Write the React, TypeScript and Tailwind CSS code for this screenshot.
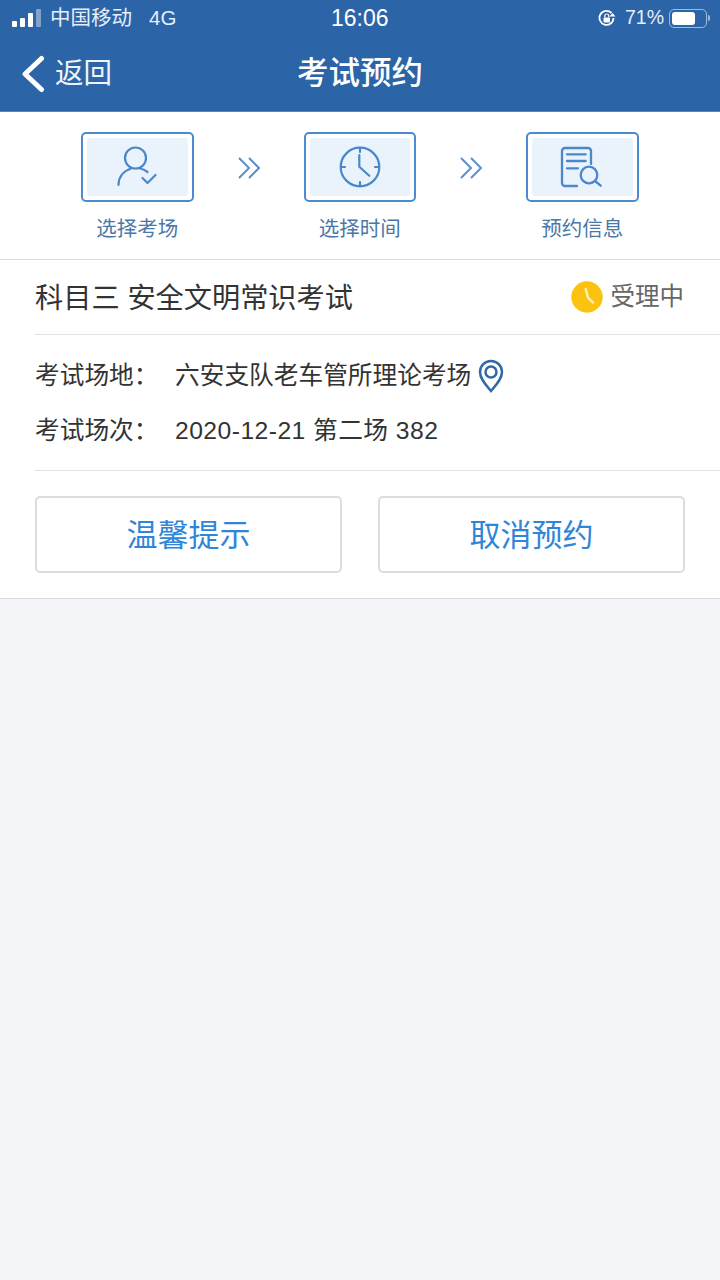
import React from 'react';

const font = { fontFamily: '"Liberation Sans", "Noto Sans CJK SC", sans-serif' };

const UserIcon = () => (
  <svg width="46" height="46" viewBox="0 0 46 46" fill="none" stroke="#4a88c9" strokeWidth="2.200" strokeLinecap="round" strokeLinejoin="round">
    <circle cx="21.500" cy="14" r="10.500" />
    <path d="M4.500 41c0-8 5-14 12.500-16.500M26 24.500c3 .5 5.500 2 7.500 3.500" />
    <path d="M28.500 34l5 5 8-8" />
  </svg>
);

const ClockIcon = () => (
  <svg width="46" height="46" viewBox="0 0 46 46" fill="none" stroke="#4a88c9" strokeWidth="2.200" strokeLinecap="round" strokeLinejoin="round">
    <circle cx="23" cy="23" r="19.300" />
    <path d="M23 4v4M23 38v4M4 23h4M38 23h4" />
    <path d="M22.300 11v11.700l10 9" />
  </svg>
);

const DocIcon = () => (
  <svg width="46" height="46" viewBox="0 0 46 46" fill="none" stroke="#4a88c9" strokeWidth="2.300" strokeLinecap="round" strokeLinejoin="round">
    <path d="M18 42H6a3 3 0 0 1-3-3V7a3 3 0 0 1 3-3h23a3 3 0 0 1 3 3v13" />
    <path d="M8 10.300h18.700M8 17h18.700M8 24.300h11" />
    <circle cx="30" cy="31" r="8.300" />
    <path d="M36 37l5.700 4.700" />
  </svg>
);

const Chevrons = () => (
  <div className="flex h-[72px] w-[110px] items-center justify-center">
    <svg width="24" height="24" viewBox="0 0 24 24" fill="none" stroke="#5b8fc9" strokeWidth="2">
      <path d="M2 2l10 10L2 22M12 2l10 10-10 10" />
    </svg>
  </div>
);

const Step = ({ icon, label }: { icon: React.ReactNode; label: string }) => (
  <div className="flex w-[112.500px] flex-col items-center">
    <div className="flex h-[70px] w-[112.500px] items-center justify-center rounded-[5px] border-2 border-[#4a8ccf] bg-white p-[4px]">
      <div className="flex h-full w-full items-center justify-center rounded-[3px] bg-[#eaf3fc]">{icon}</div>
    </div>
    <div className="mt-[14px] text-[20.500px] leading-[26px] whitespace-nowrap text-[#4a77a8]">{label}</div>
  </div>
);

export default function App() {
  return (
    <div className="flex min-h-[1280px] w-[720px] flex-col bg-[#f4f5f9]" style={font}>
      <div className="h-[112px] border-b border-[#5d87bc] bg-[#2c64a8] text-white">
        <div className="relative flex h-[36px] items-center pl-[12px] pr-[10px] text-[20.500px]">
          <div className="mb-[1px] flex items-end gap-[3px]">
            <span className="h-[6px] w-[5px] rounded-[1px] bg-white" />
            <span className="h-[9px] w-[5px] rounded-[1px] bg-white" />
            <span className="h-[14px] w-[5px] rounded-[1px] bg-white" />
            <span className="h-[18px] w-[5px] rounded-[1px] bg-white/40" />
          </div>
          <span className="ml-[9px] text-[#e6eef8]">中国移动</span>
          <span className="ml-[17px] text-[#e6eef8]">4G</span>
          <span className="absolute left-[331px] top-0 text-[23px] leading-[36px] font-medium">16:06</span>
          <div className="ml-auto flex items-center">
            <svg width="18" height="18" viewBox="0 0 18 18" fill="none" stroke="white" strokeWidth="1.800">
              <path d="M15.500 9a7 7 0 1 1-2-5" />
              <path d="M17.500 7.500h-6l3-3.500z" fill="white" stroke="none" />
              <rect x="5.500" y="8.500" width="6.500" height="5" rx="1" fill="white" stroke="none" />
              <path d="M6.800 8.500V7a2 2 0 0 1 4 0v1.500" strokeWidth="1.200" />
            </svg>
            <span className="ml-[9px] text-[19.500px] text-[#e6eef8]">71%</span>
            <div className="ml-[5px] flex h-[19px] w-[38px] items-center rounded-[5px] border border-[#9dbbe0] p-[2px]">
              <div className="h-full w-[23px] rounded-[3px] bg-white" />
            </div>
            <span className="ml-[1px] h-[6px] w-[2px] rounded-r-full bg-[#9dbbe0]" />
          </div>
        </div>
        <div className="relative flex h-[75px] items-center pl-[21px]">
          <svg width="24" height="38" viewBox="0 0 24 38" fill="none" stroke="white" strokeWidth="5" strokeLinecap="round" strokeLinejoin="round">
            <path d="M20.500 3.500L4 19l16.500 15.500" />
          </svg>
          <span className="ml-[10px] text-[28.500px] leading-none text-[#eef4fb]">返回</span>
          <span className="absolute left-[297px] top-[19px] text-[31.500px] leading-[36px] font-medium">考试预约</span>
        </div>
      </div>

      <div className="flex h-[148px] border-b border-[#dcdcdc] bg-white pl-[81px] pt-[20px]">
        <Step icon={<UserIcon />} label="选择考场" />
        <Chevrons />
        <Step icon={<ClockIcon />} label="选择时间" />
        <Chevrons />
        <Step icon={<DocIcon />} label="预约信息" />
      </div>

      <div className="border-b border-[#dcdcdc] bg-white">
        <div className="ml-[35px] flex h-[75px] items-center justify-between border-b border-[#e2e2e2] pr-[36px]">
          <span className="pt-[2px] text-[28.200px] text-[#333333]">科目三 安全文明常识考试</span>
          <div className="flex items-center">
            <svg width="32" height="32" viewBox="0 0 32 32">
              <circle cx="16" cy="16" r="15.700" fill="#fbc20f" />
              <path d="M14.700 8l2.300 8.700 5 5" fill="none" stroke="#fdeeb5" strokeWidth="2.500" strokeLinecap="round" strokeLinejoin="round" />
            </svg>
            <span className="ml-[8px] pt-[1px] text-[24.500px] text-[#666666]">受理中</span>
          </div>
        </div>
        <div className="ml-[35px] border-b border-[#e2e2e2] pb-[17px] pt-[19px] text-[24.700px] text-[#333333]">
          <div className="flex h-[44px] items-center">
            <span className="w-[140px]">考试场地：</span>
            <span>六安支队老车管所理论考场</span>
            <svg className="ml-[7px]" width="26" height="34" viewBox="0 0 26 34" fill="none" stroke="#2f6aa8" strokeWidth="2.500">
              <path d="M13 32C8 26 2 20 2 13a11 11 0 0 1 22 0c0 7-6 13-11 19z" />
              <circle cx="13" cy="13" r="5.500" />
            </svg>
          </div>
          <div className="mt-[11px] flex h-[44px] items-center">
            <span className="w-[140px]">考试场次：</span>
            <span className="tracking-[0.450px]">2020-12-21 第二场 382</span>
          </div>
        </div>
        <div className="flex h-[127px] items-center justify-between px-[35px]">
          <button className="h-[77px] w-[307px] rounded-[5px] border-2 border-[#dddddd] bg-white pt-[3px] text-[31px] text-[#2f86d8]">温馨提示</button>
          <button className="h-[77px] w-[307px] rounded-[5px] border-2 border-[#dddddd] bg-white pt-[3px] text-[31px] text-[#2f86d8]">取消预约</button>
        </div>
      </div>
    </div>
  );
}
